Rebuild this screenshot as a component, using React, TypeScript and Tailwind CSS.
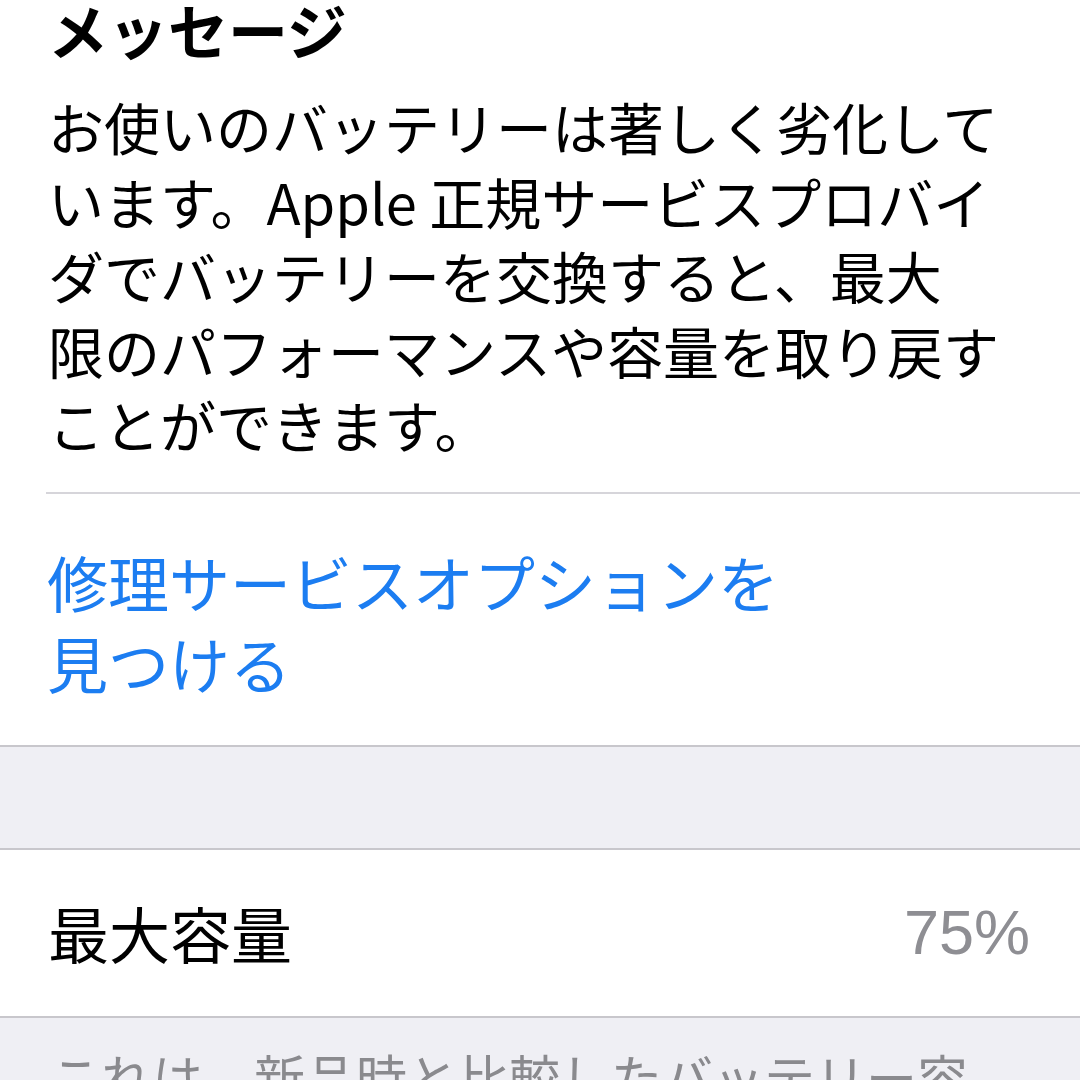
import React from 'react';

const jp = "font-['Noto_Sans_CJK_JP',sans-serif]";

const messageLines = [
  'お使いのバッテリーは著しく劣化して',
  'います。Apple 正規サービスプロバイ',
  'ダでバッテリーを交換すると、最大',
  '限のパフォーマンスや容量を取り戻す',
  'ことができます。',
];

export default function App() {
  return (
    <div className={`w-[1080px] h-[1080px] overflow-hidden bg-[#efeff4] ${jp}`}>
      <div className="bg-white border-b-2 border-[#c8c7cc]">
        <div className="pl-[48px]">
          <h2 className="-mt-[1px] text-[60px] leading-[60px] font-bold text-black">メッセージ</h2>
          <p className="mt-[30px] pb-[30px] text-[56px] leading-[74.5px] text-black whitespace-nowrap">
            {messageLines.map((line) => (
              <span key={line} className="block">{line}</span>
            ))}
          </p>
        </div>
        <div className="ml-[46px] h-[2px] bg-[#d6d5da]" />
        <div className="pl-[47px] pt-[47px] pb-[42px] text-[61px] leading-[81px] text-[#1c7df1] whitespace-nowrap">
          <span className="block">修理サービスオプションを</span>
          <span className="block">見つける</span>
        </div>
      </div>

      <div className="h-[101px]" />

      <div className="h-[170px] bg-white border-y-2 border-[#c8c7cc] flex items-center justify-between pl-[48px] pr-[50px]">
        <span className="text-[61px] text-black">最大容量</span>
        <span className="text-[63px] text-[#8e8e93] font-['Liberation_Sans',sans-serif]">75%</span>
      </div>

      <p className="pl-[50px] pt-[28px] text-[51px] leading-[60px] text-[#8a8a8e] whitespace-nowrap">
        これは、新品時と比較したバッテリー容
      </p>
    </div>
  );
}
